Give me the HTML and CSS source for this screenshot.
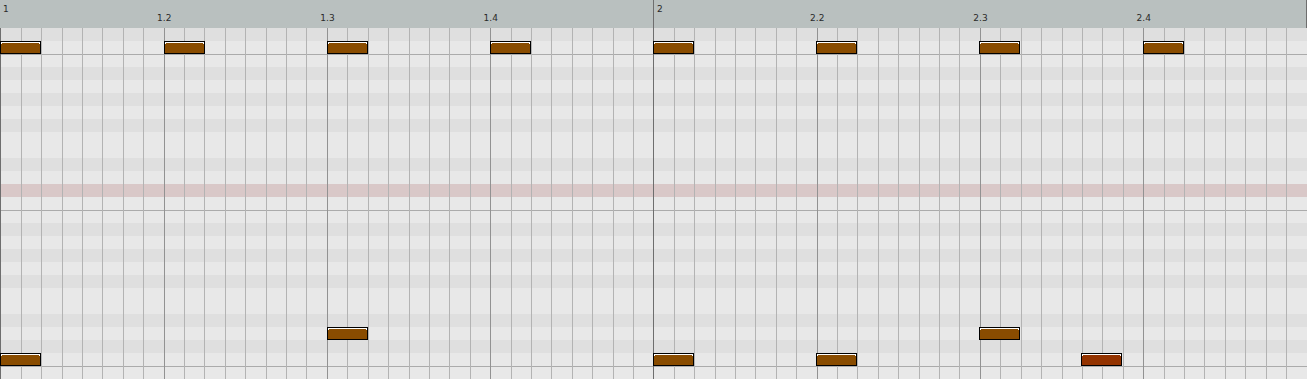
FILE: index.html
```html
<!DOCTYPE html>
<html>
<head>
<meta charset="utf-8">
<link rel="stylesheet" href="styles.css">
</head>
<body>
<div class="roll">
  <div class="ruler">
    <div class="seg"><span class="bar-label">1</span></div>
    <div class="seg"><span class="beat-label">1.2</span></div>
    <div class="seg"><span class="beat-label">1.3</span></div>
    <div class="seg"><span class="beat-label">1.4</span></div>
    <div class="seg seg-bar"><span class="bar-label">2</span></div>
    <div class="seg"><span class="beat-label">2.2</span></div>
    <div class="seg"><span class="beat-label">2.3</span></div>
    <div class="seg"><span class="beat-label">2.4</span></div>
    <div class="seg-end"></div>
  </div>
  <div class="grid">
    <div class="rows">
      <div class="row dark"></div>
      <div class="row"></div>
      <div class="row oct"></div>
      <div class="row dark"></div>
      <div class="row"></div>
      <div class="row dark"></div>
      <div class="row"></div>
      <div class="row dark"></div>
      <div class="row"></div>
      <div class="row"></div>
      <div class="row dark"></div>
      <div class="row"></div>
      <div class="row hl"></div>
      <div class="row"></div>
      <div class="row oct"></div>
      <div class="row dark"></div>
      <div class="row"></div>
      <div class="row dark"></div>
      <div class="row"></div>
      <div class="row dark"></div>
      <div class="row"></div>
      <div class="row"></div>
      <div class="row dark"></div>
      <div class="row"></div>
      <div class="row dark"></div>
      <div class="row"></div>
      <div class="row oct"></div>
    </div>
    <div class="cols">
      <div class="c m"></div><div class="c"></div><div class="c"></div><div class="c"></div><div class="c"></div><div class="c"></div><div class="c"></div><div class="c"></div>
      <div class="c b"></div><div class="c"></div><div class="c"></div><div class="c"></div><div class="c"></div><div class="c"></div><div class="c"></div><div class="c"></div>
      <div class="c b"></div><div class="c"></div><div class="c"></div><div class="c"></div><div class="c"></div><div class="c"></div><div class="c"></div><div class="c"></div>
      <div class="c b"></div><div class="c"></div><div class="c"></div><div class="c"></div><div class="c"></div><div class="c"></div><div class="c"></div><div class="c"></div>
      <div class="c m"></div><div class="c"></div><div class="c"></div><div class="c"></div><div class="c"></div><div class="c"></div><div class="c"></div><div class="c"></div>
      <div class="c b"></div><div class="c"></div><div class="c"></div><div class="c"></div><div class="c"></div><div class="c"></div><div class="c"></div><div class="c"></div>
      <div class="c b"></div><div class="c"></div><div class="c"></div><div class="c"></div><div class="c"></div><div class="c"></div><div class="c"></div><div class="c"></div>
      <div class="c b"></div><div class="c"></div><div class="c"></div><div class="c"></div><div class="c"></div><div class="c"></div><div class="c"></div><div class="c"></div>
    </div>
    <div class="notes">
      <div class="note" style="left:0px;top:13px"></div>
      <div class="note" style="left:164px;top:13px"></div>
      <div class="note" style="left:327px;top:13px"></div>
      <div class="note" style="left:490px;top:13px"></div>
      <div class="note" style="left:653px;top:13px"></div>
      <div class="note" style="left:816px;top:13px"></div>
      <div class="note" style="left:979px;top:13px"></div>
      <div class="note" style="left:1143px;top:13px"></div>
      <div class="note" style="left:327px;top:299px"></div>
      <div class="note" style="left:979px;top:299px"></div>
      <div class="note" style="left:0px;top:325px"></div>
      <div class="note" style="left:653px;top:325px"></div>
      <div class="note" style="left:816px;top:325px"></div>
      <div class="note note-red" style="left:1081px;top:325px"></div>
    </div>
  </div>
</div>
</body>
</html>
```
FILE: styles.css
```css
html, body {
  margin: 0;
  padding: 0;
  background: #e8e8e8;
  overflow: hidden;
}

.roll {
  width: 1307px;
  height: 379px;
  display: flex;
  flex-direction: column;
  font-family: "DejaVu Sans", sans-serif;
}

.ruler {
  height: 28px;
  flex: none;
  display: flex;
  background: #b9c0bf;
}

.seg {
  width: calc(1306px / 8);
  flex: none;
  box-sizing: border-box;
  display: flex;
  align-items: flex-start;
}

.seg-bar {
  border-left: 1px solid #6e6e6e;
}

.seg-end {
  width: 1px;
  background: #6e6e6e;
}

.bar-label,
.beat-label {
  font-size: 9px;
  line-height: 9px;
  color: #2a2a2a;
  white-space: nowrap;
}

.bar-label {
  margin: 5px 0 0 3px;
}

.beat-label {
  width: 0;
  display: flex;
  justify-content: center;
  margin: 14px 0 0 1px;
}

.grid {
  flex: 1;
  display: grid;
}

.rows,
.cols,
.notes {
  grid-area: 1 / 1;
}

.rows {
  display: flex;
  flex-direction: column;
}

.row {
  height: 13px;
  box-sizing: border-box;
  background: #e8e8e8;
}

.row.dark {
  background: #dfdfdf;
}

.row.hl {
  background: #d9c8c8;
}

.row.oct {
  border-top: 1px solid #ababab;
}

.cols {
  display: flex;
}

.c {
  width: calc(1306px / 64);
  flex: none;
  box-sizing: border-box;
  border-left: 1px solid #b3b3b3;
}

.c:first-child {
  width: calc(1306px / 64 + 0.4px);
}

.c.b {
  border-left-color: #929292;
}

.c.m {
  border-left-color: #6e6e6e;
}

.notes {
  position: relative;
}

.note {
  position: absolute;
  width: 41px;
  height: 13px;
  box-sizing: border-box;
  border: 1px solid #000;
  background: #894c00;
}

.note::before {
  content: "";
  display: block;
  height: 2px;
  box-sizing: border-box;
  border: 1px solid #fff;
  border-bottom: 0;
}

.note-red {
  background: #933300;
}
```
